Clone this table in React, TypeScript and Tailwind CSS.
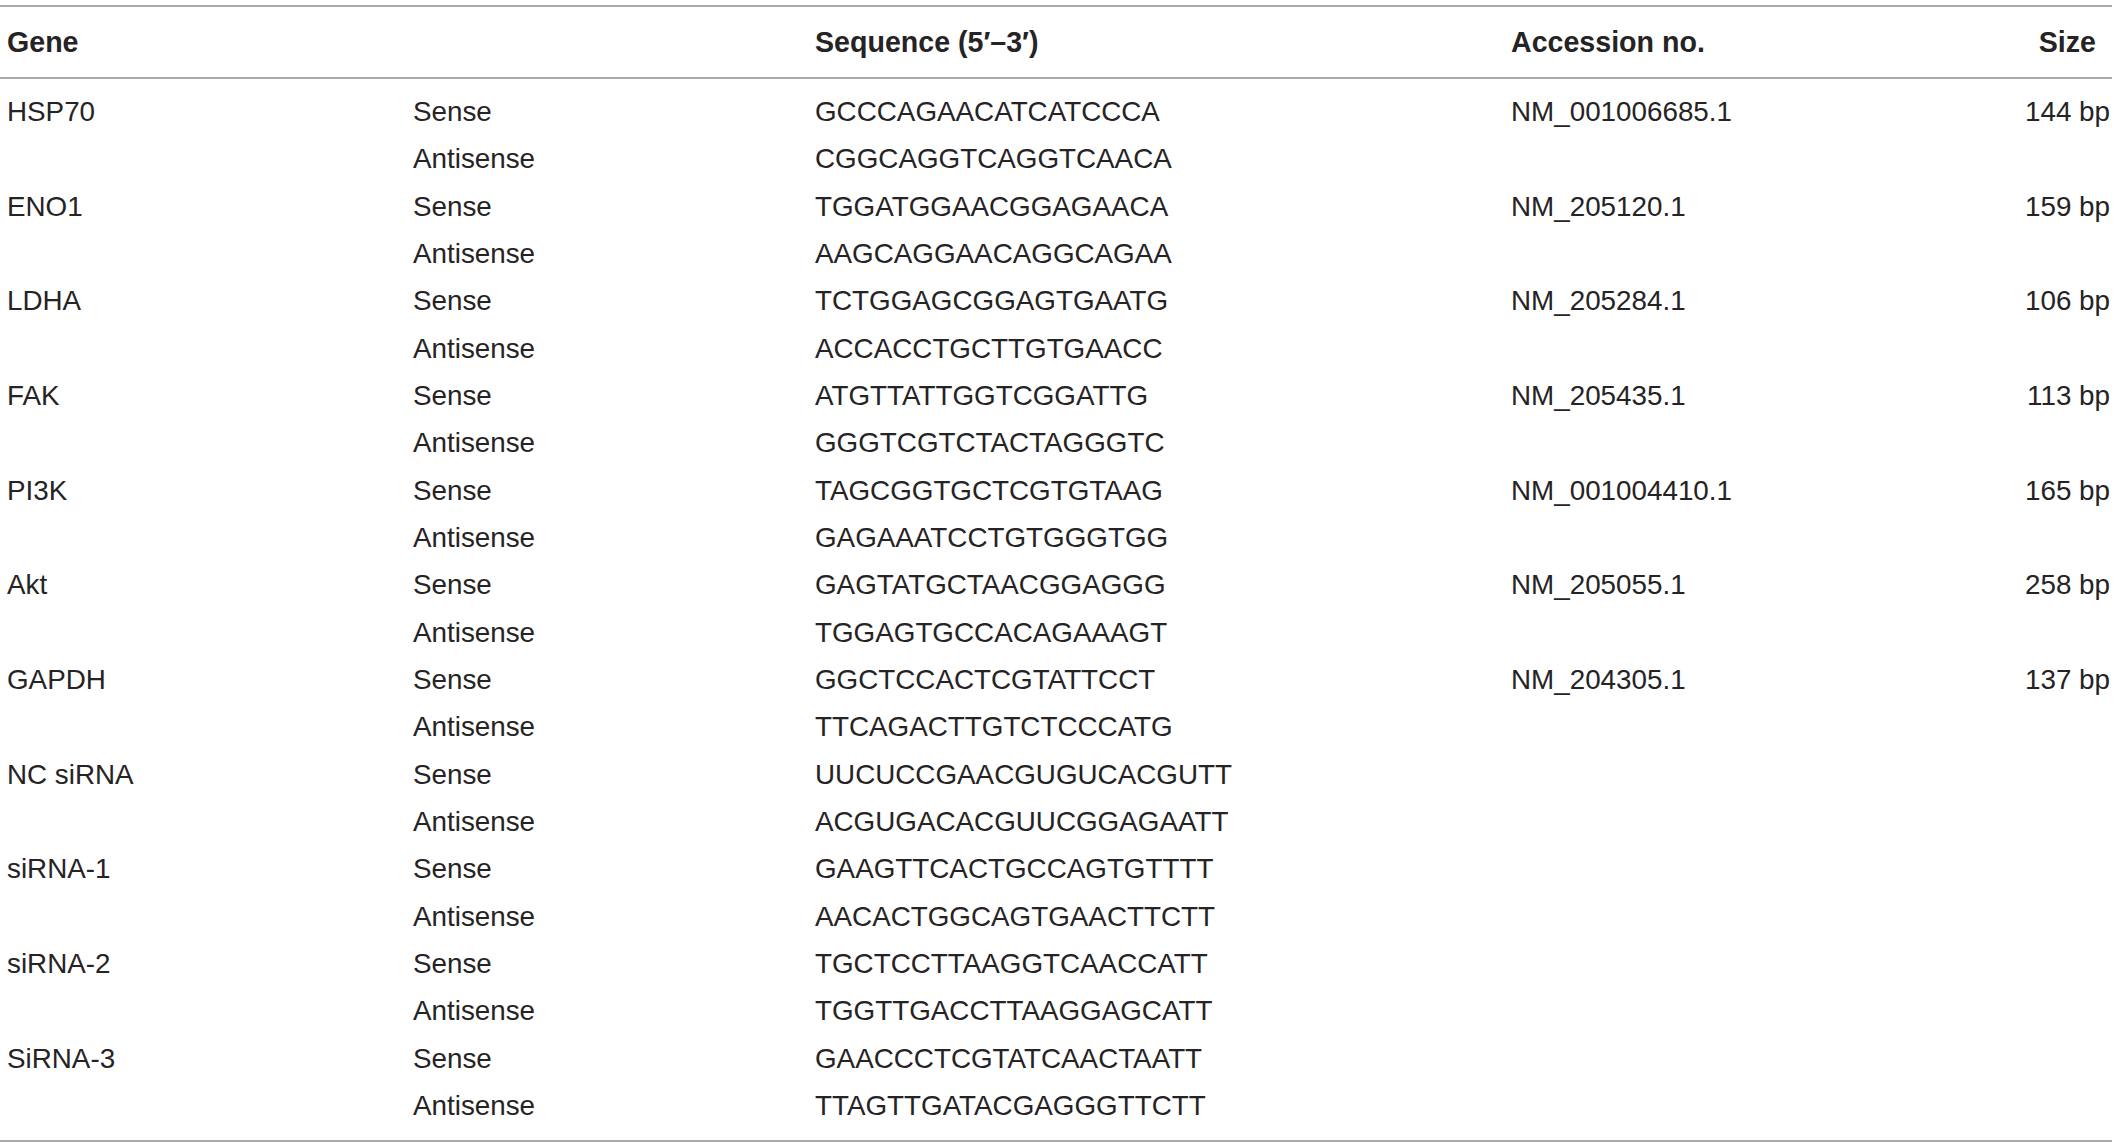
import React from "react";

type Row = { gene: string; type: string; seq: string; acc: string; size: string };

const data: [string, string, string, string, string][] = [
  ["HSP70", "GCCCAGAACATCATCCCA", "CGGCAGGTCAGGTCAACA", "NM_001006685.1", "144 bp"],
  ["ENO1", "TGGATGGAACGGAGAACA", "AAGCAGGAACAGGCAGAA", "NM_205120.1", "159 bp"],
  ["LDHA", "TCTGGAGCGGAGTGAATG", "ACCACCTGCTTGTGAACC", "NM_205284.1", "106 bp"],
  ["FAK", "ATGTTATTGGTCGGATTG", "GGGTCGTCTACTAGGGTC", "NM_205435.1", "113 bp"],
  ["PI3K", "TAGCGGTGCTCGTGTAAG", "GAGAAATCCTGTGGGTGG", "NM_001004410.1", "165 bp"],
  ["Akt", "GAGTATGCTAACGGAGGG", "TGGAGTGCCACAGAAAGT", "NM_205055.1", "258 bp"],
  ["GAPDH", "GGCTCCACTCGTATTCCT", "TTCAGACTTGTCTCCCATG", "NM_204305.1", "137 bp"],
  ["NC siRNA", "UUCUCCGAACGUGUCACGUTT", "ACGUGACACGUUCGGAGAATT", "", ""],
  ["siRNA-1", "GAAGTTCACTGCCAGTGTTTT", "AACACTGGCAGTGAACTTCTT", "", ""],
  ["siRNA-2", "TGCTCCTTAAGGTCAACCATT", "TGGTTGACCTTAAGGAGCATT", "", ""],
  ["SiRNA-3", "GAACCCTCGTATCAACTAATT", "TTAGTTGATACGAGGGTTCTT", "", ""],
];

const rows: Row[] = data.flatMap(([gene, s, a, acc, size]) => [
  { gene, type: "Sense", seq: s, acc, size },
  { gene: "", type: "Antisense", seq: a, acc: "", size: "" },
]);

export default function App() {
  return (
    <div
      className="w-[2118px] h-[1148px] bg-white text-[#262324] overflow-hidden"
      style={{ fontFamily: '"Liberation Sans", Arial, sans-serif' }}
    >
      <div className="w-[2112px] pt-[5px]">
        <div className="border-t-2 border-b-2 border-[#a9a9a9] h-[74px] grid grid-cols-[413px_402px_696px_1fr_auto] items-center text-[28.6px] font-bold pr-[16px]">
          <div className="pl-[7px]">Gene</div>
          <div></div>
          <div>Sequence (5′–3′)</div>
          <div>Accession no.</div>
          <div className="text-right">Size</div>
        </div>
        <div className="pt-[9px] pb-[10px] border-b-2 border-[#a9a9a9]">
          {rows.map((r, i) => (
            <div
              key={i}
              className="grid grid-cols-[413px_402px_696px_1fr_auto] h-[47.35px] items-center text-[27.8px] pr-[2px]"
            >
              <div className="pl-[7px]">{r.gene}</div>
              <div>{r.type}</div>
              <div>{r.seq}</div>
              <div>{r.acc}</div>
              <div className="text-right">{r.size}</div>
            </div>
          ))}
        </div>
      </div>
    </div>
  );
}
